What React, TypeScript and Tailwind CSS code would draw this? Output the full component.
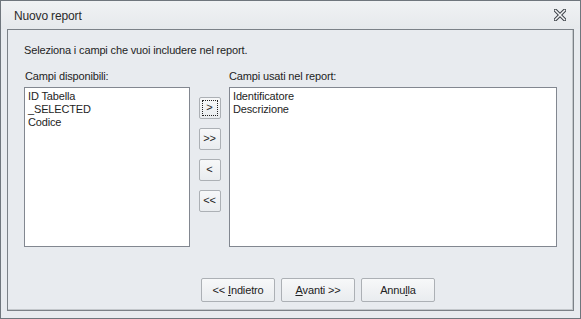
import React from "react";

const font = { fontFamily: '"Liberation Sans", Arial, sans-serif' };

function CloseIcon() {
  return (
    <svg width="12" height="12" viewBox="0 0 12 12" className="block">
      <path d="M1.5 1.5 L10.5 10.5 M10.5 1.5 L1.5 10.5" stroke="#3f444a" strokeWidth="3.6" strokeLinecap="square" />
      <path d="M1.5 1.5 L10.5 10.5 M10.5 1.5 L1.5 10.5" stroke="#f4f5f7" strokeWidth="1.5" strokeLinecap="square" />
    </svg>
  );
}

function SmallBtn({ label, focused }: { label: string; focused?: boolean }) {
  return (
    <button className="relative w-[22px] h-[22px] rounded-[2px] border border-[#acb0b5] bg-gradient-to-b from-[#f7f8f9] to-[#e9ecef] text-[11px] leading-none text-[#222] flex items-center justify-center">
      {focused && <span className="absolute inset-[2px] border border-dotted border-[#222]" />}
      <span className="-mt-px">{label}</span>
    </button>
  );
}

function BigBtn({ children }: { children: React.ReactNode }) {
  return (
    <button className="w-[74px] h-[24px] rounded-[2px] border border-[#acb0b5] bg-gradient-to-b from-[#f7f8f9] to-[#e9ecef] text-[11px] text-[#222] flex items-center justify-center">
      {children}
    </button>
  );
}

export default function App() {
  const available = ["ID Tabella", "_SELECTED", "Codice"];
  const used = ["Identificatore", "Descrizione"];

  return (
    <div style={font} className="w-[581px] h-[319px] border border-[#6f767d] bg-[#e8ebef] flex flex-col text-[11px] tracking-[-0.15px] text-[#1e1e1e] overflow-hidden">
      {/* title bar */}
      <div className="h-[28px] shrink-0 flex items-center justify-between pl-[13px] pr-[14px] bg-gradient-to-b from-[#f0f2f4] to-[#e6e9ec]">
        <span className="text-[12px] text-[#2a2a2a] pt-[1px]">Nuovo report</span>
        <CloseIcon />
      </div>

      {/* body */}
      <div className="flex-1 px-[6px] pb-[7px] flex">
        <div className="flex-1 border border-[#7b8187] shadow-[inset_-1px_-1px_0_#c3c7cb] flex flex-col pl-[16px] pr-[15px] pt-[14px]">
          <div className="leading-[13px]">Seleziona i campi che vuoi includere nel report.</div>

          <div className="flex mt-[13px]">
            <div className="w-[166px] flex flex-col">
              <div className="leading-[13px] pl-px">Campi disponibili:</div>
              <div className="mt-[4px] h-[160px] border border-[#828790] bg-white pt-[2px] pl-[3px]">
                {available.map((a) => (
                  <div key={a} className="leading-[13px]">{a}</div>
                ))}
              </div>
            </div>

            <div className="w-[39px] flex flex-col items-center pt-[27px] gap-[9px]">
              <SmallBtn label=">" focused />
              <SmallBtn label=">>" />
              <SmallBtn label="<" />
              <SmallBtn label="<<" />
            </div>

            <div className="w-[328px] flex flex-col">
              <div className="leading-[13px]">Campi usati nel report:</div>
              <div className="mt-[4px] h-[160px] border border-[#828790] bg-white pt-[2px] pl-[3px]">
                {used.map((a) => (
                  <div key={a} className="leading-[13px]">{a}</div>
                ))}
              </div>
            </div>
          </div>

          <div className="mt-[31px] flex gap-[6px] pl-[177px]">
            <BigBtn>
              &lt;&lt; <u className="ml-[3px]">I</u>ndietro
            </BigBtn>
            <BigBtn>
              <u>A</u>vanti &gt;&gt;
            </BigBtn>
            <BigBtn>
              Annu<u>l</u>la
            </BigBtn>
          </div>
        </div>
      </div>
    </div>
  );
}
